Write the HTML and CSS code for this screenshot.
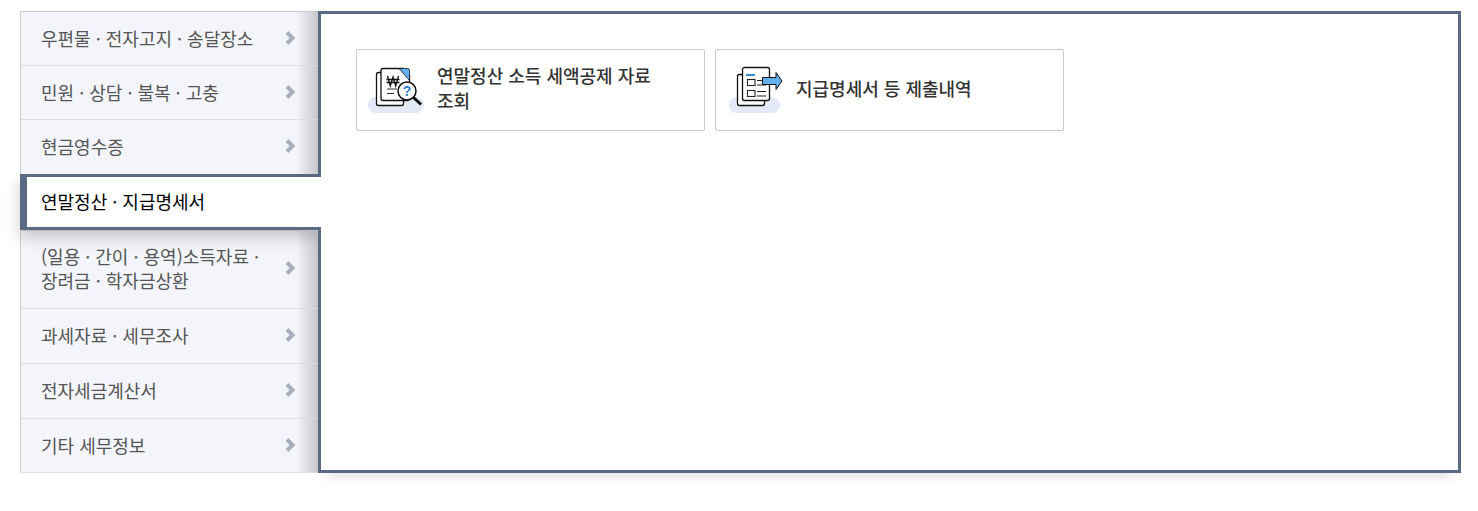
FILE: index.html
```
<!DOCTYPE html>
<html lang="ko">
<head>
<meta charset="utf-8">
<title>연말정산 · 지급명세서</title>
<link rel="stylesheet" href="styles.css">
</head>
<body>
<div class="layout">
  <ul class="menu">
    <li class="item h54"><span>우편물 · 전자고지 · 송달장소</span><svg class="chev" viewBox="0 0 10 14"><path d="M2 1.500 7.500 7 2 12.500"/></svg></li>
    <li class="item h54"><span>민원 · 상담 · 불복 · 고충</span><svg class="chev" viewBox="0 0 10 14"><path d="M2 1.500 7.500 7 2 12.500"/></svg></li>
    <li class="item h55"><span>현금영수증</span><svg class="chev" viewBox="0 0 10 14"><path d="M2 1.500 7.500 7 2 12.500"/></svg></li>
    <li class="item active"><span>연말정산 · 지급명세서</span></li>
    <li class="item tall"><span>(일용 · 간이 · 용역)소득자료 ·<br>장려금 · 학자금상환</span><svg class="chev" viewBox="0 0 10 14"><path d="M2 1.500 7.500 7 2 12.500"/></svg></li>
    <li class="item h55"><span>과세자료 · 세무조사</span><svg class="chev" viewBox="0 0 10 14"><path d="M2 1.500 7.500 7 2 12.500"/></svg></li>
    <li class="item h55"><span>전자세금계산서</span><svg class="chev" viewBox="0 0 10 14"><path d="M2 1.500 7.500 7 2 12.500"/></svg></li>
    <li class="item h54"><span>기타 세무정보</span><svg class="chev" viewBox="0 0 10 14"><path d="M2 1.500 7.500 7 2 12.500"/></svg></li>
  </ul>
  <main class="panel">
    <a class="card card-a">
      <svg class="icon" viewBox="0 0 60 50">
        <rect class="pill" x="2" y="32" width="56" height="16" rx="8"/>
        <rect class="doc" x="10.500" y="7.500" width="27" height="33" rx="2"/>
        <path class="doc" d="M17 3.500h20l6.500 7v23a2 2 0 0 1-2 2h-24.500a2 2 0 0 1-2-2v-28a2 2 0 0 1 2-2z"/>
        <path class="blue" d="M33 3.500h8.500a2 2 0 0 1 2 2v10z"/>
        <path class="won" d="M21.500 11l2.800 10 2.700-9 2.700 9 2.800-10M20.500 14.500h13M20.500 17.500h13"/>
        <path class="line" d="M21 24h10M21 28.500h7"/>
        <path class="handle" d="M47.500 32.500l7.500 7"/>
        <circle class="lens" cx="41" cy="26" r="9"/>
        <text class="q" x="41" y="31">?</text>
      </svg>
      <span class="label">연말정산 소득 세액공제 자료 조회</span>
    </a>
    <a class="card card-b">
      <svg class="icon" viewBox="0 0 60 50">
        <rect class="pill" x="4" y="32" width="51" height="16" rx="8"/>
        <rect class="doc" x="12.500" y="9.500" width="27" height="31" rx="2"/>
        <rect class="doc" x="17.500" y="2.500" width="27" height="33" rx="2"/>
        <path class="accent" d="M21 10h9"/>
        <rect class="thin" x="22.500" y="14.500" width="7.500" height="6"/>
        <rect class="thin" x="22.500" y="25.500" width="7.500" height="6"/>
        <path class="thin" d="M32 15.500h9M32 20h9M32 26.500h9M32 31h9"/>
        <path class="arrow" d="M37.500 12.500h13.500v-5l6 8.500-6 8.500v-5h-13.500z"/>
      </svg>
      <span class="label">지급명세서 등 제출내역</span>
    </a>
  </main>
</div>
</body>
</html>
```
FILE: styles.css
```
* { box-sizing: border-box; }
html, body { margin: 0; padding: 0; background: #fff; }
body { font-family: "Noto Sans CJK KR", "Noto Sans", sans-serif; height: 511px; overflow: hidden; }
.layout { display: flex; align-items: stretch; width: 1441px; height: 462px; margin: 11px 0 0 20px; }
.menu { list-style: none; margin: 0; padding: 0; width: 300px; flex: none; }
.item {
  display: flex; align-items: center; justify-content: space-between;
  padding: 0 25px 2px 20px; height: 55px;
  font-size: 18px; line-height: 24px; color: #555;
  background-color: #f3f5fb;
  background-image: linear-gradient(to right, rgba(0,0,0,0), rgba(0,0,0,.19));
  background-size: 22px 100%;
  background-position: right 2px top 0;
  background-repeat: no-repeat;
  border-left: 1px solid #ccc;
  border-top: 1px solid #ddd;
}
.item:first-child { border-top-color: #ccc; }
.h54 { height: 54px; }
.h55 { height: 55px; }
.item:last-child { border-bottom: 1px solid #ddd; height: 55px; padding-bottom: 1px; }
.tall { height: 78px; padding-bottom: 4px; }
.active {
  position: relative; z-index: 3;
  background: #fff; color: #000; height: 56px; width: 301px;
  border: 3px solid #5a6a85; border-left-width: 7px; border-right: 0;
  padding: 0 0 2px 14px;
}
.active::before {
  content: ""; position: absolute; top: -3px; bottom: -3px; left: -7px; right: 3px;
  box-shadow: 0 7px 15px rgba(0,0,0,.2);
  clip-path: inset(0 0 -40px -40px);
  pointer-events: none;
}
.chev { width: 10px; height: 14px; flex: none; overflow: visible; }
.chev path { fill: none; stroke: #a9aebc; stroke-width: 4px; }
.panel {
  position: relative; z-index: 2;
  flex: 1; margin-left: -2px; background: #fff; border: 3px solid #5a6a85;
  padding: 35px; display: flex; align-items: flex-start; gap: 10px;
  box-shadow: 0 12px 12px -9px rgba(0,0,0,.13);
}
.card {
  display: flex; align-items: center; height: 82px; width: 349px;
  border: 1px solid #c8c8c8; border-radius: 2px; background: #fff;
  padding: 0 40px 4px 9px; gap: 11px;
  font-size: 18px; line-height: 25px; font-weight: 500; color: #333;
  word-break: keep-all;
}
.icon { width: 60px; height: 50px; flex: none; margin-top: 4px; }
.pill { fill: #e3e9f6; }
.doc { fill: #fff; stroke: #111; stroke-width: 1.300px; }
.blue { fill: #64b0ee; stroke: #111; stroke-width: .8px; }
.won { fill: none; stroke: #111; stroke-width: 1.300px; }
.line { fill: none; stroke: #333; stroke-width: 1px; }
.handle { stroke: #111; stroke-width: 3px; fill: none; }
.lens { fill: #fff; stroke: #111; stroke-width: 1.500px; }
.q { font-size: 14px; font-weight: 700; fill: #2f7fd0; text-anchor: middle; font-family: "Liberation Sans", sans-serif; }
.accent { stroke: #2c8ad8; stroke-width: 2px; fill: none; }
.thin { fill: none; stroke: #222; stroke-width: 1.100px; }
.arrow { fill: #64b0ee; stroke: #111; stroke-width: 1px; }
```
